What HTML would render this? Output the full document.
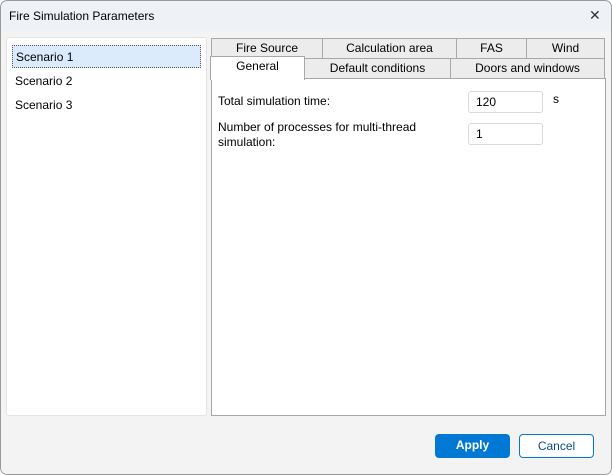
<!DOCTYPE html><html><head><style>
*{box-sizing:border-box;margin:0;padding:0}
body{width:612px;height:475px;overflow:hidden;font-family:"Segoe UI","Liberation Sans",sans-serif;font-size:12px;color:#000;background:#fff}
.win{position:absolute;left:0;top:0;width:612px;height:475px;border-radius:7px;background:#f3f3f3;overflow:hidden}
.frame{position:absolute;left:0;top:0;width:612px;height:475px;border:1px solid #9a9a9a;border-radius:7px}
.title{position:absolute;left:0;top:0;width:612px;height:31px;background:#eef2f6}
.title span{position:absolute;left:9px;top:9px;font-size:12px}
.x{position:absolute;left:589px;top:7px;font-size:14px;color:#333}
.list{position:absolute;left:6px;top:37px;width:201px;height:379px;background:#fff;border:1px solid #e3e3e3;border-radius:3px}
.it{position:absolute;left:5px;width:189px;height:23px;padding:4px 0 0 3px;font-size:12px}
.sel{background:#dcebfb;border:1px dotted #555}
.tab{position:absolute;height:21px;background:#ececec;border:1px solid #a8a8a8;text-align:center;font-size:12px;padding-top:2px}
.panel{position:absolute;left:211px;top:78px;width:395px;height:338px;background:#fff;border:1px solid #a8a8a8}
.inp{position:absolute;width:75px;height:22px;border:1px solid #d9d9d9;border-radius:3px;background:#fff;padding:3px 0 0 7px}
.lbl{position:absolute;font-size:12px}
.btn{position:absolute;top:434px;width:75px;height:24px;border-radius:4px;text-align:center;padding-top:4px;font-size:12px}
</style></head><body><div class="win">
<div class="title"><span>Fire Simulation Parameters</span><div class="x">✕</div></div>
<div class="list">
<div class="it sel" style="top:7px">Scenario 1</div>
<div class="it" style="top:32px">Scenario 2</div>
<div class="it" style="top:56px">Scenario 3</div>
</div>
<div class="tab" style="left:211px;top:38px;width:112px">Fire Source</div>
<div class="tab" style="left:322px;top:38px;width:135px">Calculation area</div>
<div class="tab" style="left:456px;top:38px;width:71px">FAS</div>
<div class="tab" style="left:526px;top:38px;width:79px">Wind</div>
<div class="panel"></div>
<div class="tab" style="left:304px;top:58px;width:147px">Default conditions</div>
<div class="tab" style="left:450px;top:58px;width:155px">Doors and windows</div>
<div class="tab" style="left:210px;top:56px;width:95px;height:24px;background:#fff;border-bottom:none">General</div>
<div class="lbl" style="left:218px;top:94px">Total simulation time:</div>
<div class="inp" style="left:468px;top:91px">120</div>
<div class="lbl" style="left:553px;top:92px">s</div>
<div class="lbl" style="left:218px;top:120px;line-height:15px">Number of processes for multi-thread<br>simulation:</div>
<div class="inp" style="left:468px;top:123px">1</div>
<div class="btn" style="left:435px;background:#0078d4;color:#fff;font-weight:bold">Apply</div>
<div class="btn" style="left:519px;background:#fff;border:1px solid #0078d4;color:#0a4d8c">Cancel</div>
<div class="frame"></div>
</div></body></html>
